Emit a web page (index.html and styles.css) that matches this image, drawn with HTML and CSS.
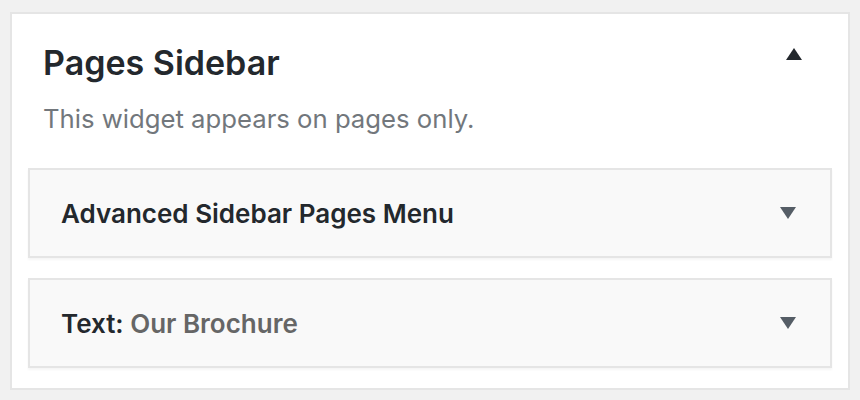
FILE: index.html
```html
<!DOCTYPE html>
<html>
<head>
<meta charset="utf-8">
<link rel="stylesheet" href="styles.css">
</head>
<body>
<div class="sidebar">
  <div class="sidebar-head">
    <h2 class="sidebar-title">Pages Sidebar</h2>
    <svg class="arrow-up" width="16" height="12" viewBox="0 0 16 12"><polygon points="8,0 16,12 0,12" fill="#23282d"/></svg>
  </div>
  <p class="sidebar-desc">This widget appears on pages only.</p>
  <div class="widgets">
    <div class="widget">
      <span class="widget-title">Advanced Sidebar Pages Menu</span>
      <svg class="arrow-down" width="16" height="12" viewBox="0 0 16 12"><polygon points="0,0 16,0 8,12" fill="#555d66"/></svg>
    </div>
    <div class="widget">
      <span class="widget-title">Text:<span class="in-title"> Our Brochure</span></span>
      <svg class="arrow-down" width="16" height="12" viewBox="0 0 16 12"><polygon points="0,0 16,0 8,12" fill="#555d66"/></svg>
    </div>
  </div>
</div>
</body>
</html>
```
FILE: styles.css
```css
html, body {
  margin: 0;
  padding: 0;
  background: #f1f1f1;
}
body {
  font-family: Inter, "Noto Sans", sans-serif;
  color: #23282d;
}
.sidebar {
  margin: 12px 0 0 10px;
  width: 840px;
  height: 378px;
  box-sizing: border-box;
  background: #fff;
  border: 2px solid #e5e5e5;
}
.sidebar-head {
  display: flex;
  align-items: flex-start;
  justify-content: space-between;
  padding: 0 46px 0 31px;
  height: 90px;
}
.sidebar-title {
  margin: 29px 0 0;
  font-size: 34px;
  line-height: 40px;
  font-weight: 600;
  color: #23282d;
}
.arrow-up {
  display: block;
  margin-top: 34px;
}
.sidebar-desc {
  margin: 0;
  padding: 0 31px;
  font-size: 25.7px;
  color: #72777c;
  line-height: 30px;
  height: 64px;
}
.widgets {
  display: flex;
  flex-direction: column;
  gap: 20px;
  padding: 0 16px;
}
.widget {
  display: flex;
  align-items: center;
  justify-content: space-between;
  height: 90px;
  box-sizing: border-box;
  background: #f9f9f9;
  border: 2px solid #e5e5e5;
  box-shadow: 0 2px 2px rgba(0,0,0,0.04);
  padding: 0 34px 0 31px;
}
.widget-title {
  font-size: 26px;
  font-weight: 600;
  color: #23282d;
}
.in-title {
  color: #666;
}
.arrow-down {
  display: block;
}
```
